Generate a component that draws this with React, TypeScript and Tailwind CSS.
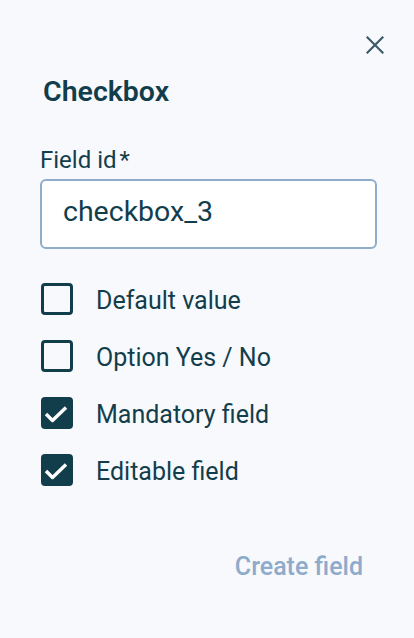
const options = [
  { label: 'Default value', checked: false },
  { label: 'Option Yes / No', checked: false },
  { label: 'Mandatory field', checked: true },
  { label: 'Editable field', checked: true },
]

function CloseIcon() {
  return (
    <svg width="18" height="18" viewBox="0 0 18 18" fill="none" stroke="currentColor" strokeWidth="2.2" strokeLinecap="square">
      <path d="M1.5 1.5 16.5 16.5M16.5 1.5 1.5 16.5" />
    </svg>
  )
}

function Box({ checked }: { checked: boolean }) {
  if (!checked) {
    return <span className="shrink-0 w-[32px] h-[32px] rounded-[4px] border-[3px] border-[#123e4c]" />
  }
  return (
    <span className="shrink-0 w-[32px] h-[32px] rounded-[4px] bg-[#123e4c] text-white">
      <svg width="32" height="32" viewBox="0 0 32 32" fill="none" stroke="currentColor" strokeWidth="3.4" strokeLinejoin="round">
        <path d="M5 17 11.5 23.5 25 10.5" />
      </svg>
    </span>
  )
}

export default function App() {
  return (
    <div
      className="min-h-screen w-full bg-[#f8f9fd] text-[#123e4c] flex flex-col"
      style={{ fontFamily: 'Roboto, "Noto Sans", sans-serif' }}
    >
      <div className="flex justify-end pt-[36px] pr-[30px]">
        <button className="text-[#3b5b68] block" aria-label="close">
          <CloseIcon />
        </button>
      </div>

      <div className="px-[40px]">
        <h2 className="mt-[21px] ml-[3px] text-[28.5px] leading-[34px] font-semibold">Checkbox</h2>

        <label className="mt-[37px] block text-[24px] leading-[28px]">
          Field id<span className="ml-[3px]">*</span>
        </label>
        <div className="mt-[5px] h-[70px] w-[337px] rounded-[6px] border-2 border-[#8facca] bg-white flex items-center px-[21px] pb-[4px] text-[28.5px] leading-[34px]">
          checkbox_3
        </div>

        <div className="mt-[34px] flex flex-col gap-[23px]">
          {options.map((o) => (
            <div key={o.label} className="flex items-start gap-[23px] pl-[1px]">
              <Box checked={o.checked} />
              <span className="mt-[2px] text-[25px] leading-[32px]">{o.label}</span>
            </div>
          ))}
        </div>
      </div>

      <div className="flex justify-end pr-[51px] mt-[64px]">
        <button className="text-[25px] leading-[30px] font-medium text-[#8fabcb]">Create field</button>
      </div>
    </div>
  )
}
